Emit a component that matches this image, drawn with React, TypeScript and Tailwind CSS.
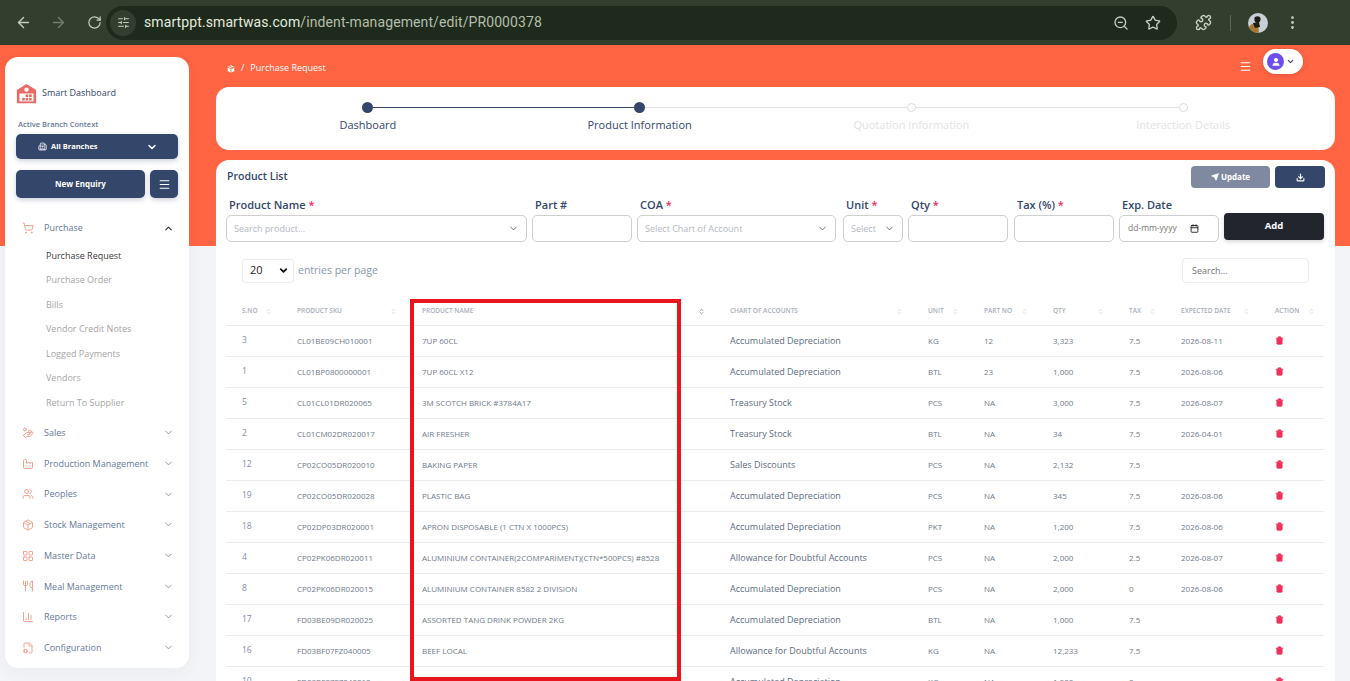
import React from "react";
import {
  ArrowLeft,
  ArrowRight,
  BarChart3,
  Building2,
  ChevronDown,
  ChevronUp,
  ChevronsUpDown,
  Download,
  EllipsisVertical,
  Factory,
  FileCog,
  HandCoins,
  LayoutGrid,
  Menu,
  Package,
  Puzzle,
  RotateCw,
  Send,
  ShoppingCart,
  SlidersHorizontal,
  Star,
  Trash2,
  User,
  Users,
  Utensils,
  ZoomOut,
  Calendar,
} from "lucide-react";

const AD = "Accumulated Depreciation";
const AF = "Allowance for Doubtful Accounts";

const rows = [
  ["3", "CL01BE09CH010001", "7UP 60CL", AD, "KG", "12", "3,323", "7.5", "2026-08-11"],
  ["1", "CL01BP0800000001", "7UP 60CL X12", AD, "BTL", "23", "1,000", "7.5", "2026-08-06"],
  ["5", "CL01CL01DR020065", "3M SCOTCH BRICK #3784A17", "Treasury Stock", "PCS", "NA", "3,000", "7.5", "2026-08-07"],
  ["2", "CL01CM02DR020017", "AIR FRESHER", "Treasury Stock", "BTL", "NA", "34", "7.5", "2026-04-01"],
  ["12", "CP02CO05DR020010", "BAKING PAPER", "Sales Discounts", "PCS", "NA", "2,132", "7.5", ""],
  ["19", "CP02CO05DR020028", "PLASTIC BAG", AD, "PCS", "NA", "345", "7.5", "2026-08-06"],
  ["18", "CP02DP03DR020001", "APRON DISPOSABLE (1 CTN X 1000PCS)", AD, "PKT", "NA", "1,200", "7.5", "2026-08-06"],
  ["4", "CP02PK06DR020011", "ALUMINIUM CONTAINER(2COMPARIMENT)(CTN*500PCS) #8528", AF, "PCS", "NA", "2,000", "2.5", "2026-08-07"],
  ["8", "CP02PK06DR020015", "ALUMINIUM CONTAINER 8582 2 DIVISION", AD, "PCS", "NA", "2,000", "0", "2026-08-06"],
  ["17", "FD03BE09DR020025", "ASSORTED TANG DRINK POWDER 2KG", AD, "BTL", "NA", "1,000", "7.5", ""],
  ["16", "FD03BF07FZ040005", "BEEF LOCAL", AF, "KG", "NA", "12,233", "7.5", ""],
  ["10", "FD03BF07FZ040010", "BEEF TENDERLOIN", AD, "KG", "NA", "1,500", "0", ""],
];

const columns = [
  { label: "S.NO", width: "w-[55px]" },
  { label: "PRODUCT SKU", width: "w-[125px]" },
  { label: "PRODUCT NAME", width: "w-[308px]" },
  { label: "CHART OF ACCOUNTS", width: "w-[198px]" },
  { label: "UNIT", width: "w-[56px]" },
  { label: "PART NO", width: "w-[69px]" },
  { label: "QTY", width: "w-[76px]" },
  { label: "TAX", width: "w-[52px]" },
  { label: "EXPECTED DATE", width: "w-[94px]" },
  { label: "ACTION", width: "w-[65px]" },
];

const subItems = ["Purchase Order", "Bills", "Vendor Credit Notes", "Logged Payments", "Vendors", "Return To Supplier"];

const navItems = [
  { label: "Sales", icon: HandCoins },
  { label: "Production Management", icon: Factory },
  { label: "Peoples", icon: Users },
  { label: "Stock Management", icon: Package },
  { label: "Master Data", icon: LayoutGrid },
  { label: "Meal Management", icon: Utensils },
  { label: "Reports", icon: BarChart3 },
  { label: "Configuration", icon: FileCog },
];

const FieldLabel = ({ text, required }: { text: string; required?: boolean }) => (
  <div className="h-[17px] pl-[3px] text-[11px] leading-[17px] font-semibold text-[#34466a]">
    {text}
    {required && <span className="text-[#f0245e]"> *</span>}
  </div>
);

const BrowserBar = () => (
  <div className="flex h-[45px] shrink-0 items-center bg-[#323f2f] text-[#c3cfbd]">
    <div className="flex w-[106px] shrink-0 items-center pl-[15px]">
      <ArrowLeft className="h-[17px] w-[17px]" />
      <ArrowRight className="ml-[18px] h-[17px] w-[17px] text-[#6f7d69]" />
      <RotateCw className="ml-[20px] h-[15px] w-[15px]" />
    </div>
    <div className="flex h-[34px] w-[1071px] items-center rounded-full bg-[#1e2a1b] pl-[4px]">
      <div className="flex h-[26px] w-[26px] items-center justify-center rounded-full bg-[#323f2f]">
        <SlidersHorizontal className="h-[13px] w-[13px]" />
      </div>
      <div className="ml-[8px] flex-1 text-[14px] tracking-[0.1px] font-['Roboto',sans-serif]">
        <span className="text-[#e4ebdf]">smartppt.smartwas.com</span>
        <span className="text-[#b3bfae]">/indent-management/edit/PR0000378</span>
      </div>
      <ZoomOut className="h-[16px] w-[16px]" />
      <Star className="mr-[16px] ml-[16px] h-[16px] w-[16px]" />
    </div>
    <Puzzle className="ml-[18px] h-[17px] w-[17px]" />
    <div className="ml-[18px] h-[16px] w-px bg-[#5a6856]" />
    <svg viewBox="0 0 20 20" className="ml-[17px] h-[20px] w-[20px] rounded-full">
      <rect width="20" height="20" fill="#c9cfd6" />
      <path d="M7 4c2-1.500 5-1 5.500 1.500S11 10 9 10 5.500 6 7 4Z" fill="#1c1a1b" />
      <path d="M1 14c2-3 6-5 9-4l1 10H2Z" fill="#a9782f" />
      <path d="M5 10l6-1 1 5-5 1Z" fill="#201c1c" />
    </svg>
    <EllipsisVertical className="ml-[16px] h-[17px] w-[17px]" />
  </div>
);

const LogoIcon = () => (
  <svg viewBox="0 0 24 24" className="h-[21px] w-[21px]">
    <path d="M1 8 12 1l11 7v15H1Z" fill="#ea6a68" />
    <circle cx="12" cy="7.500" r="2.500" fill="#fff" />
    <rect x="4" y="12" width="16" height="9" fill="#fff" />
    <rect x="11" y="13" width="3" height="3" fill="#ea6a68" />
    <rect x="15" y="13" width="3" height="3" fill="#ea6a68" />
    <rect x="7" y="17" width="3" height="3" fill="#ea6a68" />
    <rect x="11" y="17" width="3" height="3" fill="#ea6a68" />
    <rect x="15" y="17" width="3" height="3" fill="#ea6a68" />
  </svg>
);

const Sidebar = () => (
  <aside className="ml-[5px] mt-[12px] h-[611px] w-[184px] shrink-0 rounded-[13px] bg-white shadow-[0_4px_16px_rgba(52,70,106,0.05)]">
    <div className="flex h-[50px] items-end pl-[11px] pb-[3px]">
      <LogoIcon />
      <span className="mb-[5px] ml-[5px] text-[9px] leading-[12px] font-medium text-[#34466a]">Smart Dashboard</span>
    </div>
    <div className="mt-[11px] pl-[13px] text-[7.500px] leading-[12px] font-semibold text-[#66789a]">Active Branch Context</div>
    <div className="mx-[11px] mt-[4px] flex h-[25px] items-center rounded-[5px] bg-[#34466a] pr-[20px] pl-[22px] text-white shadow-[0_2px_5px_rgba(52,70,106,0.25)]">
      <Building2 className="h-[9px] w-[9px]" />
      <span className="ml-[4px] flex-1 text-[7.500px] font-bold">All Branches</span>
      <ChevronDown className="h-[12px] w-[12px]" strokeWidth={3} />
    </div>
    <div className="mx-[11px] mt-[11px] flex gap-[5px]">
      <div className="flex h-[28px] flex-1 items-center justify-center rounded-[5px] bg-[#34466a] text-[8px] font-bold text-white shadow-[0_2px_5px_rgba(52,70,106,0.25)]">
        New Enquiry
      </div>
      <div className="flex h-[28px] w-[28px] items-center justify-center rounded-[5px] bg-[#34466a] text-white shadow-[0_2px_5px_rgba(52,70,106,0.25)]">
        <Menu className="h-[13px] w-[13px]" />
      </div>
    </div>
    <div className="mt-[18px] flex h-[24px] items-center pr-[15px] pl-[17px]">
      <ShoppingCart className="h-[12px] w-[12px] text-[#f3a48f]" />
      <span className="ml-[10px] flex-1 text-[9px] text-[#66789a]">Purchase</span>
      <ChevronUp className="h-[11px] w-[11px] text-[#333]" strokeWidth={2.5} />
    </div>
    <div className="mt-[3px] flex h-[24.500px] items-center pl-[41px] text-[9px] font-medium text-[#3a3a3a]">Purchase Request</div>
    {subItems.map((item) => (
      <div key={item} className="flex h-[24.500px] items-center pl-[41px] text-[9px] text-[#a5a5a5]">
        {item}
      </div>
    ))}
    <div className="mt-[3px] flex flex-col">
      {navItems.map(({ label, icon: Icon }) => (
        <div key={label} className="flex h-[30.700px] items-center pr-[15px] pl-[17px]">
          <Icon className="h-[12px] w-[12px] text-[#f3a48f]" />
          <span className="ml-[10px] flex-1 text-[9px] text-[#66789a]">{label}</span>
          <ChevronDown className="h-[11px] w-[11px] text-[#8a8f99]" />
        </div>
      ))}
    </div>
  </aside>
);

const Stepper = () => {
  const steps = ["Dashboard", "Product Information", "Quotation Information", "Interaction Details"];
  return (
    <div className="mt-[7px] grid h-[63px] grid-cols-4 rounded-[13px] bg-white px-[16px] pt-[15px]">
      {steps.map((step, i) => {
        const done = i < 2;
        return (
          <div key={step} className="flex flex-col items-center">
            <div className="flex h-[11px] w-full items-center">
              <div className={`h-[1px] flex-1 ${i === 0 ? "" : i === 1 ? "bg-[#34466a]" : "bg-[#e2e2e2]"}`} />
              <div
                className={
                  done
                    ? "h-[11px] w-[11px] rounded-full bg-[#34466a]"
                    : "h-[9px] w-[9px] rounded-full border border-[#dcdcdc] bg-white"
                }
              />
              <div className={`h-[1px] flex-1 ${i === 3 ? "" : i === 0 ? "bg-[#34466a]" : "bg-[#e2e2e2]"}`} />
            </div>
            <div className={`mt-[4px] text-[11px] leading-[16px] ${done ? "text-[#34466a]" : "text-[#e3e3e3]"}`}>{step}</div>
          </div>
        );
      })}
    </div>
  );
};

const FormRow = () => (
  <div className="mt-[8px] flex gap-[5px]">
    <div className="w-[301px]">
      <FieldLabel text="Product Name" required />
      <div className="mt-[2px] flex h-[27px] items-center rounded-[5px] border border-[#cfcfcf] px-[7px] text-[9px] text-[#b4b9c2]">
        <span className="flex-1">Search product...</span>
        <ChevronDown className="h-[11px] w-[11px] text-[#5b6a82]" />
      </div>
    </div>
    <div className="w-[100px]">
      <FieldLabel text="Part #" />
      <div className="mt-[2px] h-[27px] rounded-[5px] border border-[#cfcfcf]" />
    </div>
    <div className="w-[199px]">
      <FieldLabel text="COA" required />
      <div className="mt-[2px] flex h-[27px] items-center rounded-[5px] border border-[#cfcfcf] px-[7px] text-[9px] text-[#b4b9c2]">
        <span className="flex-1">Select Chart of Account</span>
        <ChevronDown className="h-[11px] w-[11px] text-[#5b6a82]" />
      </div>
    </div>
    <div className="ml-[2px] w-[60px]">
      <FieldLabel text="Unit" required />
      <div className="mt-[2px] flex h-[27px] items-center rounded-[5px] border border-[#cfcfcf] px-[7px] text-[9px] text-[#b4b9c2]">
        <span className="flex-1">Select</span>
        <ChevronDown className="h-[11px] w-[11px] text-[#5b6a82]" />
      </div>
    </div>
    <div className="w-[100px]">
      <FieldLabel text="Qty" required />
      <div className="mt-[2px] h-[27px] rounded-[5px] border border-[#cfcfcf]" />
    </div>
    <div className="ml-[1px] w-[100px]">
      <FieldLabel text="Tax (%)" required />
      <div className="mt-[2px] h-[27px] rounded-[5px] border border-[#cfcfcf]" />
    </div>
    <div className="w-[100px]">
      <FieldLabel text="Exp. Date" />
      <div className="mt-[2px] flex h-[27px] items-center rounded-[5px] border border-[#cfcfcf] pr-[19px] pl-[8px] text-[8.500px] text-[#777]">
        <span className="flex-1">dd-mm-yyyy</span>
        <Calendar className="h-[9px] w-[9px] text-[#222]" strokeWidth={2.5} />
      </div>
    </div>
    <div className="mt-[17px] flex h-[27px] w-[100px] items-center justify-center rounded-[4px] bg-[#22252c] text-[9.500px] font-bold text-white shadow-[0_2px_4px_rgba(0,0,0,0.15)]">
      Add
    </div>
  </div>
);

const ProductTable = () => (
  <table className="mt-[15px] w-[1098px] table-fixed border-collapse">
    <thead>
      <tr className="h-[27px] border-b border-[#e9ebef]">
        {columns.map((col, i) => (
          <th key={col.label} className={`${col.width} pl-[16px] text-left font-semibold`}>
            <div className="flex items-center justify-between pr-[9px] pl-0">
              <span className="text-[6.500px] whitespace-nowrap text-[#a8aeba]">{col.label}</span>
              <ChevronsUpDown className={`h-[7px] w-[7px] shrink-0 ${i === 2 ? "text-[#555]" : "text-[#c5c8cf]"}`} />
            </div>
          </th>
        ))}
      </tr>
    </thead>
    <tbody>
      {rows.map((row) => (
        <tr key={row[0]} className="h-[31px] border-b border-[#e9ebef] text-[#6f7a8a]">
          <td className="pl-[16px] text-[8.500px] text-[#7d8ea5]">{row[0]}</td>
          <td className="pl-[16px] text-[8px]">{row[1]}</td>
          <td className="pl-[16px] text-[8px] whitespace-nowrap">{row[2]}</td>
          <td className="pl-[16px] text-[9px] text-[#5d6b80]">{row[3]}</td>
          <td className="pl-[16px] text-[8px]">{row[4]}</td>
          <td className="pl-[16px] text-[8px]">{row[5]}</td>
          <td className="pl-[16px] text-[8px]">{row[6]}</td>
          <td className="pl-[16px] text-[8px]">{row[7]}</td>
          <td className="pl-[16px] text-[8px]">{row[8]}</td>
          <td className="pl-[16px]">
            <Trash2 className="h-[9px] w-[9px] fill-[#f0305a] text-[#f0305a]" />
          </td>
        </tr>
      ))}
    </tbody>
  </table>
);

const App = () => (
  <div className="flex h-[681px] w-[1350px] flex-col overflow-hidden font-['Open_Sans',sans-serif]">
    <BrowserBar />
    <div className="flex min-h-0 flex-1 bg-[linear-gradient(#ff6443_201px,#f3f4f7_201px)]">
      <Sidebar />
      <main className="ml-[27px] w-[1119px] shrink-0">
        <div className="flex h-[35px] items-end pb-[6px] pl-[10px] text-white">
          <Package className="h-[10px] w-[10px] fill-white text-[#ff6443]" />
          <span className="ml-[5px] text-[9px] leading-[12px]">/</span>
          <span className="ml-[6px] text-[9px] leading-[12px] font-medium">Purchase Request</span>
          <Menu className="mb-[1px] ml-auto h-[13px] w-[13px]" />
          <div className="mr-[32px] ml-[11px] flex h-[25px] w-[40px] items-center rounded-full bg-white pl-[4px] shadow-[0_1px_4px_rgba(0,0,0,0.15)]">
            <div className="flex h-[17px] w-[17px] items-center justify-center rounded-full bg-[#6b4df0]">
              <User className="h-[10px] w-[10px] fill-white text-white" />
            </div>
            <ChevronDown className="ml-[2px] h-[9px] w-[9px] text-[#34466a]" strokeWidth={3} />
          </div>
        </div>
        <Stepper />
        <section className="mt-[10px] h-[600px] rounded-[13px] bg-white px-[10px] pt-[6px]">
          <div className="flex h-[22px] items-center">
            <span className="ml-[1px] flex-1 text-[10.500px] font-semibold text-[#34466a]">Product List</span>
            <div className="flex h-[22px] w-[79px] items-center justify-center gap-[2px] rounded-[4px] bg-[#7f8aa0] text-[8px] font-bold text-white">
              <Send className="h-[8px] w-[8px] fill-white" />
              Update
            </div>
            <div className="ml-[5px] flex h-[22px] w-[50px] items-center justify-center rounded-[4px] bg-[#34466a] text-white">
              <Download className="h-[9px] w-[9px]" strokeWidth={3} />
            </div>
          </div>
          <FormRow />
          <div className="mt-[16px] flex items-center pr-[16px] pl-[16px]">
            <div className="flex h-[24px] w-[52px] items-center rounded-[3px] border border-[#ececec] pr-[4px] pl-[7px] text-[11px] text-[#222]">
              <span className="flex-1">20</span>
              <ChevronDown className="h-[11px] w-[11px] text-[#111]" strokeWidth={4} />
            </div>
            <span className="ml-[4px] flex-1 text-[10.500px] text-[#8a97ac]">entries per page</span>
            <div className="flex h-[25px] w-[127px] items-center rounded-[4px] border border-[#ececec] pl-[9px] text-[9px] text-[#777]">
              Search...
            </div>
          </div>
          <ProductTable />
        </section>
      </main>
    </div>
    {/* red annotation box drawn over the screenshot */}
    <div className="pointer-events-none absolute top-[299px] left-[410px] h-[382px] w-[271px] border-[4px] border-[#e8161c]" />
  </div>
);

export default App;
